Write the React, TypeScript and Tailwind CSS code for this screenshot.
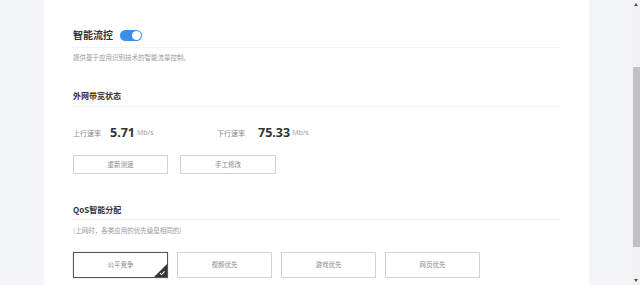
import React from "react";

const cjk = { fontFamily: '"Noto Sans CJK SC", "Noto Sans", sans-serif' };

function OptionBox({ label, active }: { label: string; active?: boolean }) {
  return (
    <div
      className={`relative flex h-[26px] w-[95px] items-center justify-center border text-[6.5px] text-[#888] ${
        active ? "border-[#555] shadow-[0_0_1px_rgba(0,0,0,0.3)]" : "border-[#d2d2d2]"
      }`}
    >
      {label}
      {active && (
        <svg className="absolute bottom-0 right-0" width="13" height="13" viewBox="0 0 13 13">
          <polygon points="13,0 13,13 0,13" fill="#2f3742" />
          <path d="M6 9.2 L7.6 10.6 L10.6 7.4" stroke="#fff" strokeWidth="1.1" fill="none" />
        </svg>
      )}
    </div>
  );
}

export default function App() {
  return (
    <div className="flex h-[285px] w-[640px] overflow-hidden bg-[#f4f5f9]" style={cjk}>
      <div className="w-[44px] shrink-0 bg-[#f4f5f9]" />
      <div className="w-[545px] shrink-0 bg-white pl-[28px] pt-[27px]">
        <div className="w-[488px]">
          <div className="flex h-[16px] items-center gap-[7px] pl-[1px]">
            <span className="text-[10px] font-semibold leading-none text-[#333]">智能流控</span>
            <span className="relative flex h-[11px] w-[22px] items-center rounded-full bg-[#3b8ee4]">
              <span className="absolute right-[1px] h-[9px] w-[9px] rounded-full bg-white" />
            </span>
          </div>
          <div className="mt-[4px] h-px bg-[#f3f3f3]" />
          <div className="mt-[4px] h-[10px] pl-[1px] text-[6.5px] leading-[10px] text-[#999]">
            提供基于应用识别技术的智能流量控制。
          </div>

          <div className="mt-[28px] h-[12px] pl-[1px] text-[8px] font-bold leading-[12px] text-[#333]">外网带宽状态</div>
          <div className="mt-[4px] h-px bg-[#f3f3f3]" />

          <div className="mt-[18px] flex h-[16px] items-center pl-[1px]">
            <div className="flex w-[144px] items-center">
              <span className="text-[7px] text-[#888]">上行速率</span>
              <span
                className="ml-[9px] text-[12.5px] font-bold leading-none text-[#333]"
                style={{ fontFamily: '"Open Sans", sans-serif' }}
              >
                5.71
              </span>
              <span className="ml-[2px] text-[7px] text-[#999]" style={{ fontFamily: '"Open Sans", sans-serif' }}>
                Mb/s
              </span>
            </div>
            <div className="flex items-center">
              <span className="text-[7px] text-[#888]">下行速率</span>
              <span
                className="ml-[13px] text-[12.5px] font-bold leading-none text-[#333]"
                style={{ fontFamily: '"Open Sans", sans-serif' }}
              >
                75.33
              </span>
              <span className="ml-[2px] text-[7px] text-[#999]" style={{ fontFamily: '"Open Sans", sans-serif' }}>
                Mb/s
              </span>
            </div>
          </div>

          <div className="mt-[14px] flex gap-[12px] pl-[1px]">
            <div className="flex h-[19px] w-[95px] items-center justify-center border border-[#d2d2d2] text-[6.5px] text-[#888]">
              重新测速
            </div>
            <div className="flex h-[19px] w-[96px] items-center justify-center border border-[#d2d2d2] text-[6.5px] text-[#888]">
              手工修改
            </div>
          </div>

          <div className="mt-[30px] h-[12px] pl-[1px] text-[8px] font-bold leading-[12px] text-[#333]">QoS智能分配</div>
          <div className="mt-[3px] h-px bg-[#f3f3f3]" />
          <div className="mt-[5px] h-[10px] pl-[1px] text-[6.5px] leading-[10px] text-[#999]">
            (上网时，各类应用的优先级是相同的)
          </div>

          <div className="mt-[17px] flex gap-[9px] pl-[1px]">
            <OptionBox label="公平竞争" active />
            <OptionBox label="视频优先" />
            <OptionBox label="游戏优先" />
            <OptionBox label="网页优先" />
          </div>
        </div>
      </div>
      <div className="w-[43px] shrink-0 bg-[#f4f5f9]" />
      <div className="relative w-[8px] shrink-0 bg-[#f1f1f1]">
        <svg className="absolute left-[2px] top-[3px]" width="4" height="3" viewBox="0 0 4 3">
          <polygon points="2,0 4,3 0,3" fill="#505050" />
        </svg>
        <div className="absolute left-[1px] right-0 top-[67px] h-[180px] bg-[#c1c1c1]" />
        <svg className="absolute bottom-[3px] left-[2px]" width="4" height="3" viewBox="0 0 4 3">
          <polygon points="0,0 4,0 2,3" fill="#505050" />
        </svg>
      </div>
    </div>
  );
}
